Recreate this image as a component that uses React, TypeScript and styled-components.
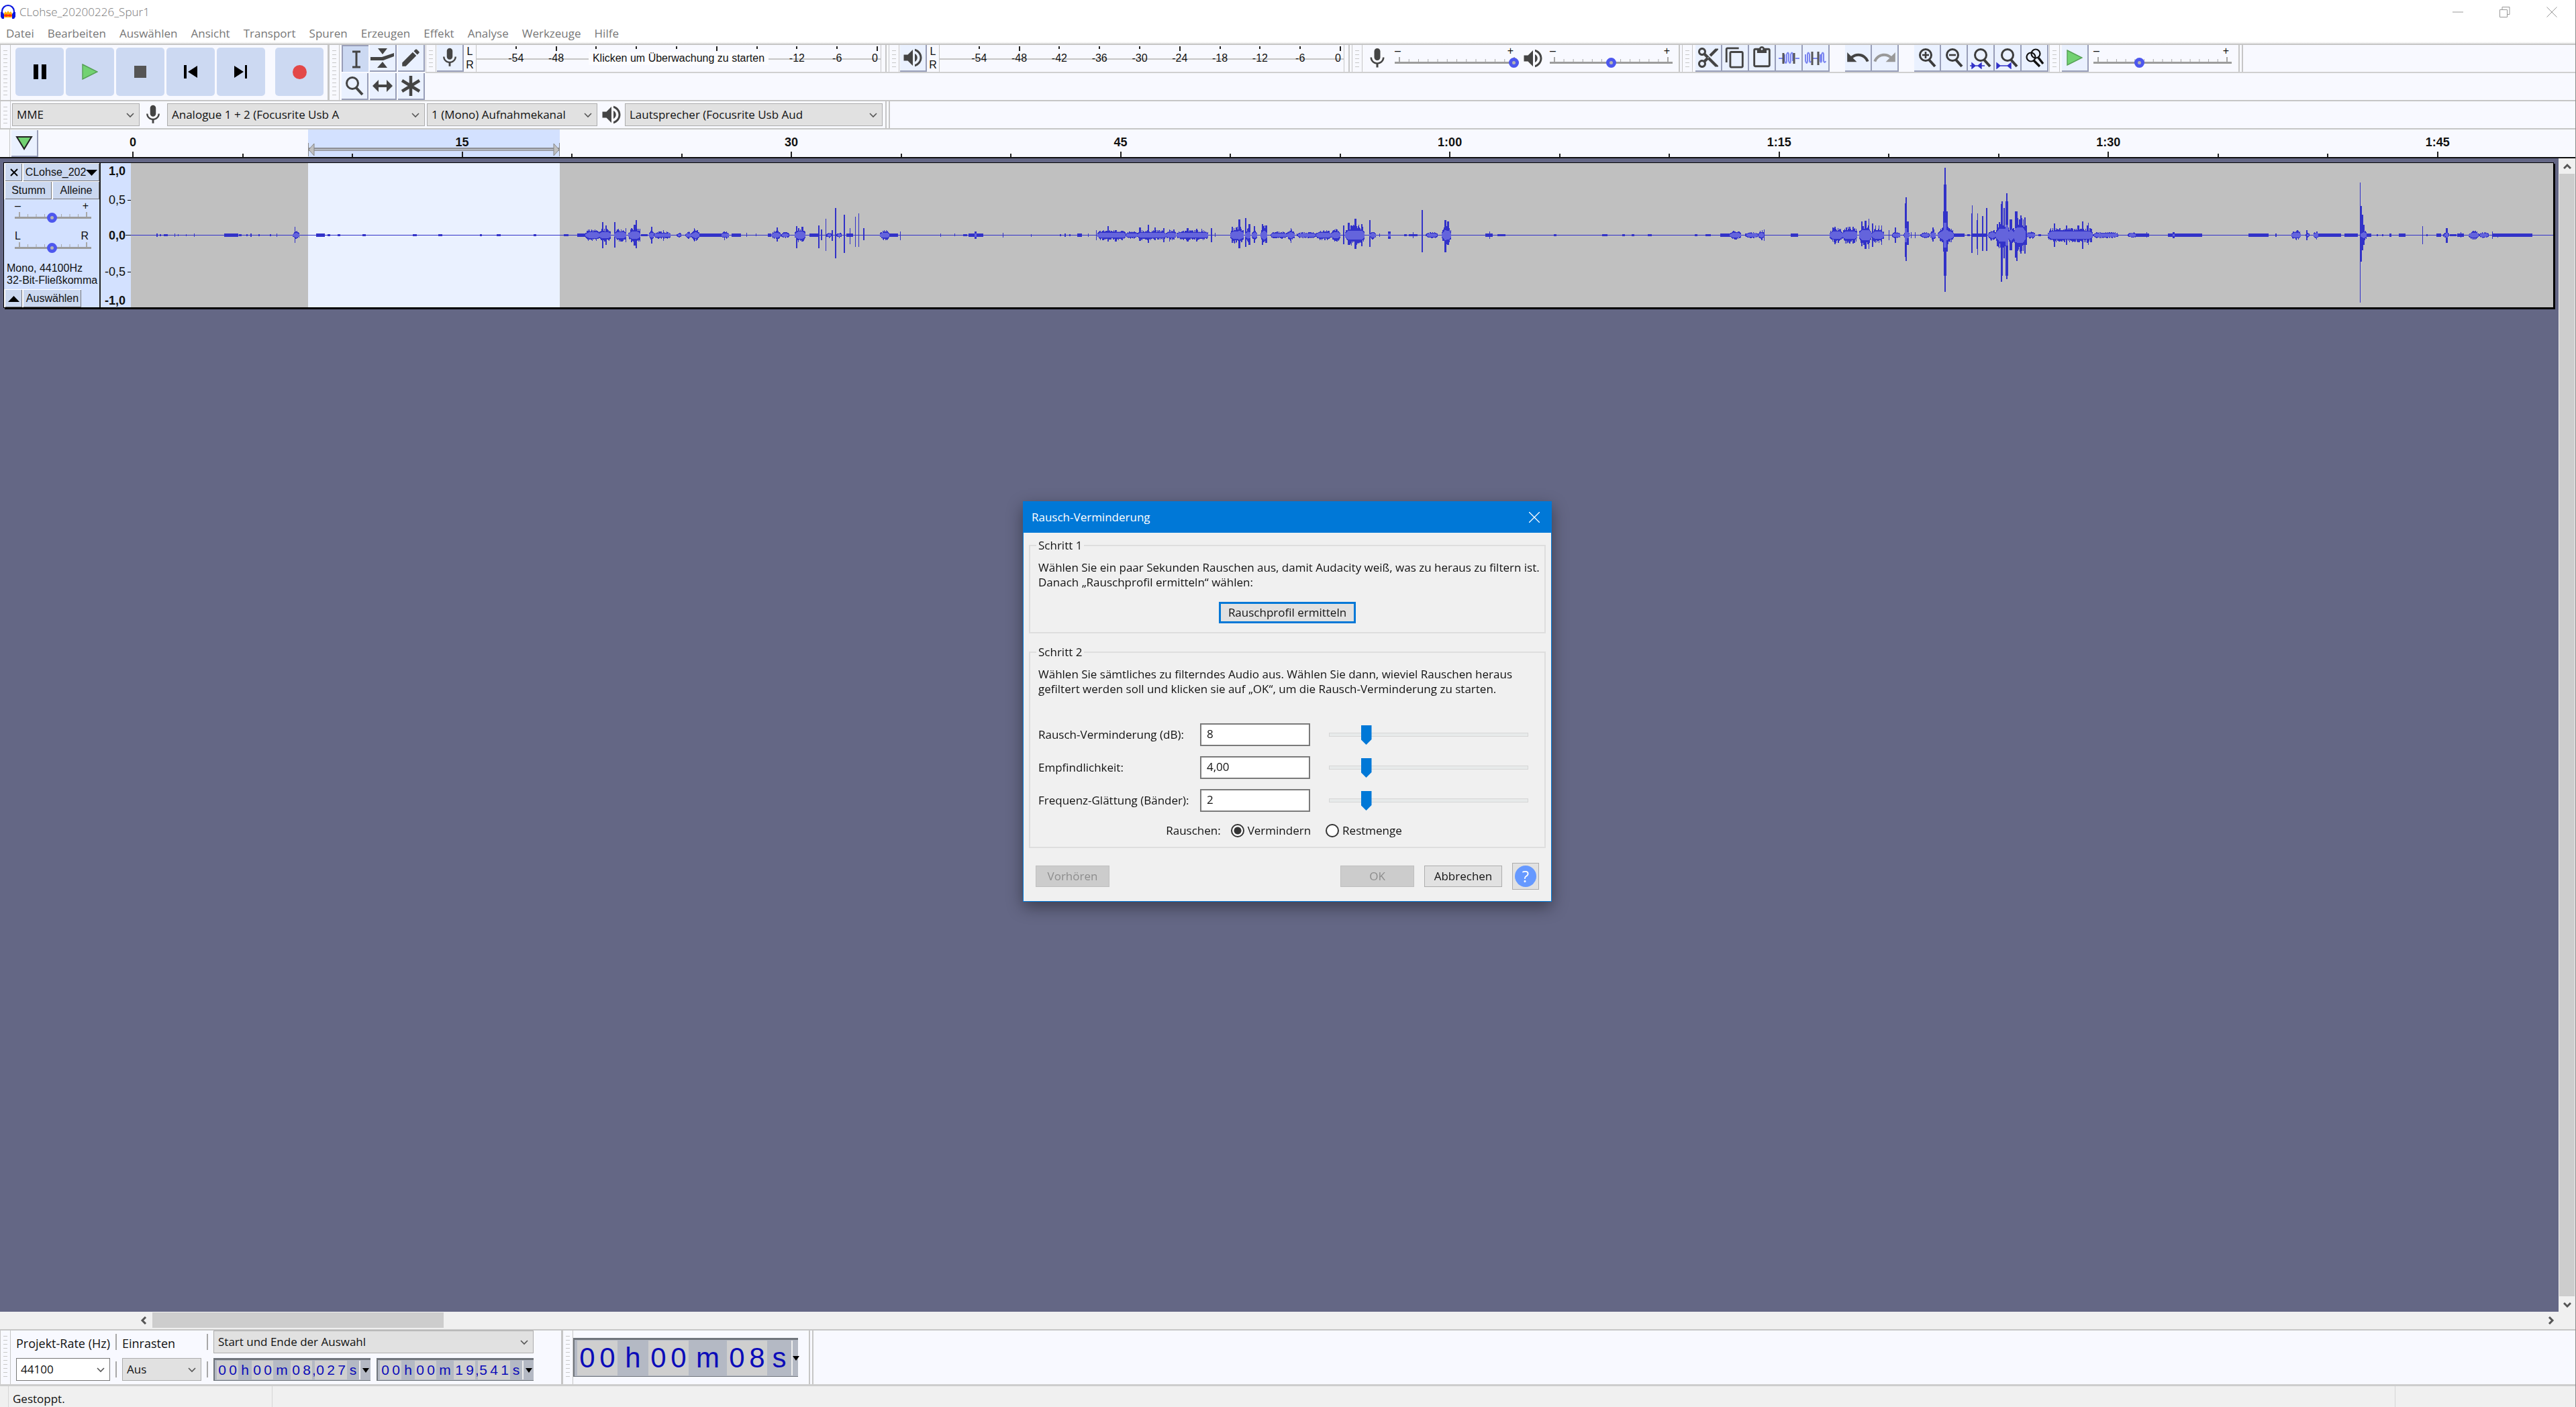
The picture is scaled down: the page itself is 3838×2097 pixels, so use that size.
import React from "react";
import styled, { createGlobalStyle, css } from "styled-components";
import {
  MdContentCopy,
  MdContentCut,
  MdContentPaste,
  MdEdit,
  MdMic,
  MdRedo,
  MdUndo,
  MdVolumeUp,
} from "react-icons/md";

const ui = '"Open Sans", "Noto Sans", sans-serif';
const arial = '"Liberation Sans", Arial, sans-serif';

const c = {
  bar: "#f8f9ff",
  line: "#c6c6c6",
  tool: "#eaf1ff",
  press: "#ccd9f2",
  panel: "#d3e1ff",
  edge: "#989eb8",
  icon: "#444444",
  area: "#646785",
  accent: "#0078d7",
  blue: "#3232c8",
  rms: "#6464dc",
};

const GlobalStyle = createGlobalStyle`
  *, *::before, *::after { box-sizing: border-box; }
  body { margin: 0; font-family: ${ui}; font-size: 17px; line-height: 22px; color: #111; }
  button, input, select { font: inherit; color: inherit; margin: 0; }
  button { padding: 0; border: 0; background: none; }
  svg { display: block; }
`;

/* ---------- window frame ---------- */

const Window = styled.div`
  display: flex;
  flex-direction: column;
  height: 100vh;
  background: ${c.bar};
  border-right: 1px solid #8a8a8a;
  overflow: hidden;
`;

const TitleBar = styled.header`
  display: flex;
  align-items: center;
  height: 36px;
  background: #fff;
  color: #999;
`;

const WindowTitle = styled.h1`
  flex: 1;
  margin: 0 0 0 5px;
  font-size: 17px;
  font-weight: 300;
  color: #777;
`;

const CaptionButton = styled.button`
  display: grid;
  place-items: center;
  width: 70px;
  height: 32px;
`;

const MenuBar = styled.nav`
  display: flex;
  gap: 20px;
  height: 29px;
  padding: 3px 9px 0;
  background: linear-gradient(#fff 26px, #e8e8e8 29px);
`;

const MenuItem = styled.button`
  height: 22px;
  color: #777;
`;

/* ---------- toolbars ---------- */

const ToolDock = styled.div`
  display: flex;
  height: 84px;
  border-top: 2px solid ${c.line};
`;

const Toolbar = styled.div<{ $gap?: boolean }>`
  display: flex;
  align-items: stretch;
  border-right: 2px solid ${c.line};
  margin-right: ${(p) => (p.$gap ? "3px" : "0")};
`;

const Grabber = styled.div`
  flex: none;
  width: 16px;
  border-left: 1px solid ${c.line};
  border-right: 1px solid ${c.line};
  background: repeating-linear-gradient(transparent 0 4px, #c8c8c8 4px 5px, transparent 5px 6px) 4px
    4px / 6px calc(100% - 10px) no-repeat;
`;

const TransportButtons = styled.div`
  display: flex;
  gap: 3px;
  padding: 4px 6px 4px 7px;
`;

const TransportButton = styled.button<{ $apart?: boolean }>`
  display: grid;
  place-items: center;
  width: 72px;
  height: 72px;
  border-radius: 5px;
  background: ${c.press};
  margin-left: ${(p) => (p.$apart ? "12px" : "0")};
`;

const ToolGrid = styled.div`
  display: grid;
  grid-template-columns: repeat(3, 40px);
  grid-auto-rows: 40px;
  gap: 2px;
  padding: 0 1px 0 3px;
`;

const ToolButton = styled.button<{ $down?: boolean }>`
  flex: none;
  display: grid;
  place-items: center;
  width: 40px;
  height: 40px;
  color: ${c.icon};
  background: ${(p) => (p.$down ? c.press : c.tool)};
  border: solid ${c.edge};
  border-width: ${(p) => (p.$down ? "2px 0 0 2px" : "0 2px 2px 0")};
`;

const DockRows = styled.div`
  flex: 1;
  display: grid;
  grid-template-rows: 42px 40px;
`;

const DockRow = styled.div`
  display: flex;
  border-bottom: 2px solid #d0d0d0;
`;

const MeterToolbar = styled(Toolbar)`
  padding-right: 6px;
  gap: 1px;
`;

const Channels = styled.div`
  display: grid;
  width: 16px;
  font: 16px/20px ${arial};
  place-items: center;
`;

const MeterBox = styled.button`
  display: grid;
  width: 604px;
  border-left: 1px solid ${c.line};
  border-right: 1px solid ${c.line};
  font: 16px/20px ${arial};
  background: linear-gradient(${c.line}, ${c.line}) 0 20px / 100% 2px no-repeat;
  > * { grid-area: 1 / 1; }
`;

const MeterScale = styled.span`
  display: flex;
  padding-right: 4px;
`;

const MeterMark = styled.span<{ $long?: boolean; $last?: boolean }>`
  flex: 1;
  display: flex;
  flex-direction: column;
  align-items: flex-end;
  padding-top: 2px;
  &::before {
    content: "";
    width: 2px;
    height: ${(p) => (p.$long ? "7px" : "4px")};
    margin-bottom: ${(p) => (p.$long ? "1px" : "4px")};
    background: #222;
  }
  > span {
    display: flex;
    justify-content: ${(p) => (p.$last ? "flex-end" : "center")};
    width: 2px;
  }
`;

const MeterHint = styled.span`
  place-self: center;
  padding: 0 6px;
  background: #fcfcff;
`;

const MixerBody = styled.div<{ $end: number }>`
  display: flex;
  align-items: flex-start;
  padding-right: ${(p) => p.$end}px;
`;

const BarIcon = styled.span<{ $w: number }>`
  display: grid;
  place-items: center;
  align-self: center;
  width: ${(p) => p.$w}px;
  padding-right: 4px;
  color: ${c.icon};
`;

const SliderBox = styled.label<{ $w: number }>`
  display: block;
  flex: none;
  width: ${(p) => p.$w}px;
  font: 16px/18px ${arial};
`;

const SliderMarks = styled.span<{ $inset: number }>`
  display: flex;
  justify-content: space-between;
  height: 17px;
  padding: 0 ${(p) => p.$inset}px 0 0;
`;

const SliderTrack = styled.span`
  display: grid;
  height: 18px;
  > * { grid-area: 1 / 1; width: 100%; height: 18px; }
`;

const RoundRange = styled.input`
  appearance: none;
  background: linear-gradient(#9c9c9c, #9c9c9c) 0 8px / 100% 3px no-repeat;
  &::-webkit-slider-thumb {
    appearance: none;
    width: 15px;
    height: 15px;
    border: 5px solid #4d57ee;
    border-radius: 50%;
    background: #b4b4b4;
  }
`;

const ButtonRun = styled.div`
  display: flex;
  gap: 23px;
  padding: 0 1px 0 4px;
`;

const ButtonSet = styled.div`
  display: flex;
`;

const DeviceBar = styled.div`
  display: flex;
  height: 42px;
  border-top: 2px solid ${c.line};
`;

const DeviceFields = styled.div`
  display: flex;
  align-items: center;
  padding: 0 1px 1px 2px;
`;

const SelectBox = styled.span<{ $w: number; $plain?: boolean }>`
  display: grid;
  align-items: center;
  width: ${(p) => p.$w}px;
  margin-right: 3px;
  > * { grid-area: 1 / 1; }
  > svg { justify-self: end; margin-right: 8px; pointer-events: none; }
  > select {
    appearance: none;
    width: 100%;
    height: 34px;
    padding: 0 28px 0 6px;
    border: 1px solid ${(p) => (p.$plain ? "#777" : "#adadad")};
    border-radius: 0;
    background: ${(p) => (p.$plain ? "#fff" : "#e1e1e1")};
  }
`;

/* ---------- timeline ---------- */

const Timeline = styled.div`
  display: flex;
  height: 45px;
  border-top: 2px solid ${c.line};
  border-bottom: 2px solid #111;
`;

const TimelineHead = styled.div`
  width: 197px;
  padding-left: 14px;
`;

const PinCell = styled.div`
  border-left: 1px solid ${c.line};
  padding: 1px 0 0 2px;
`;

const TimelineScale = styled.div`
  position: relative;
  flex: 1;
  display: grid;
  grid-template-columns: repeat(7, 4904fr) 2062fr;
`;

const TimelineSelection = styled.div`
  position: absolute;
  left: 7.2%;
  width: 10.3%;
  top: 0;
  bottom: 0;
  display: flex;
  align-items: flex-end;
  justify-content: space-between;
  padding-bottom: 1px;
  background:
    linear-gradient(#8e9096 0 2px, #b4b8c0 2px 4px, #8e9096 4px 5px) 0 27px / 100% 5px no-repeat,
    ${c.panel};
`;

const Segment = styled.div<{ $parts: number }>`
  position: relative;
  display: grid;
  grid-template-columns: repeat(${(p) => p.$parts}, 1fr);
  align-items: end;
`;

const Tick = styled.span<{ $major?: boolean }>`
  display: flex;
  flex-direction: column;
  align-items: center;
  justify-content: space-between;
  width: 2px;
  height: ${(p) => (p.$major ? "32px" : "5px")};
  font: bold 18px/20px ${arial};
  &::after {
    content: "";
    width: 2px;
    height: ${(p) => (p.$major ? "8px" : "5px")};
    background: #222;
  }
`;

/* ---------- tracks ---------- */

const Workspace = styled.main`
  flex: 1;
  display: flex;
  min-height: 0;
`;

const TrackArea = styled.div`
  flex: 1;
  min-width: 0;
  padding: 6px 7px 0 5px;
  background: ${c.area};
`;

const Track = styled.section`
  display: flex;
  height: 217px;
  border: 1px solid #000;
  box-shadow: 2px 2px 0 #000;
`;

const TrackPanel = styled.div`
  flex: none;
  display: flex;
  flex-direction: column;
  width: 144px;
  border-right: 2px solid #222;
  background: ${c.panel};
  font: 16px/18px ${arial};
`;

const PanelRow = styled.div`
  display: flex;
  height: 27px;
`;

const PanelButton = styled.button<{ $w?: number }>`
  ${(p) => (p.$w ? css`flex: none; width: ${p.$w}px;` : css`flex: 1;`)}
  display: flex;
  align-items: center;
  justify-content: center;
  overflow: hidden;
  white-space: nowrap;
  background: #cbd8f0;
  border: solid #fff;
  border-width: 1px 0 0 2px;
  box-shadow: inset -1px -1px #77777a;
`;

const PanelSliders = styled.div`
  flex: 1;
  display: flex;
  flex-direction: column;
  gap: 10px;
  padding: 1px 0 0 16px;
`;

const TrackInfo = styled.p`
  margin: 0;
  padding: 0 0 4px 4px;
  white-space: nowrap;
`;

const LevelRuler = styled.div`
  flex: none;
  display: grid;
  grid-template-rows: 24fr 62fr 43fr 66fr 20fr;
  width: 45px;
  background: ${c.panel};
  font: 18px/20px ${arial};
`;

const Level = styled.span<{ $bold?: boolean; $tick: number }>`
  display: flex;
  align-items: center;
  justify-content: flex-end;
  font-weight: ${(p) => (p.$bold ? "bold" : "normal")};
  &::after {
    content: "";
    width: ${(p) => p.$tick}px;
    height: 1px;
    margin-left: ${(p) => 8 - p.$tick}px;
    background: #111;
  }
`;

const Wave = styled.svg`
  flex: 1;
  min-width: 0;
  height: 215px;
  background: #c0c0c0;
`;

const VScroll = styled.div`
  display: flex;
  flex-direction: column;
  width: 25px;
  padding: 0 1px;
  background: #f0f0f0;
`;

const HScroll = styled.div`
  display: flex;
  height: 26px;
  padding: 1px 25px 2px 203px;
  background: #f0f0f0;
`;

const ScrollButton = styled.button`
  display: grid;
  place-items: center;
  flex: none;
  width: 24px;
  height: 23px;
`;

const ScrollTrack = styled.div`
  flex: 1;
  display: flex;
`;

const ScrollThumb = styled.div<{ $size: string; $vertical?: boolean }>`
  background: #cdcdcd;
  ${(p) => (p.$vertical ? `width: 100%; height: ${p.$size};` : `height: 100%; width: ${p.$size};`)}
`;

/* ---------- bottom bars ---------- */

const BottomDock = styled.footer`
  display: flex;
  height: 85px;
  border-top: 2px solid ${c.line};
  border-bottom: 3px solid #cdcdcd;
`;

const SelectionFields = styled.div`
  display: grid;
  grid-template-columns: 140px 2px 118px 2px 477px;
  column-gap: 8px;
  grid-template-rows: 34px 34px;
  row-gap: 7px;
  align-items: center;
  padding: 0 41px 0 8px;
`;

const FieldLabel = styled.span`
  font-size: 18px;
  white-space: nowrap;
  padding-top: 4px;
`;

const Divider = styled.i`
  height: 24px;
  background: #a8a8a8;
`;

const TimePair = styled.div`
  display: flex;
  justify-content: space-between;
`;

const TimeBox = styled.div<{ $big?: boolean }>`
  display: flex;
  width: ${(p) => (p.$big ? 335 : 234)}px;
  height: ${(p) => (p.$big ? 58 : 34)}px;
  padding: ${(p) => (p.$big ? "1px 0 1px 4px" : "1px 0 1px 3px")};
  border: solid #70757c;
  border-width: 3px 0 1px 2px;
  background: #b4b9c4;
  color: #0b0bb8;
  font: ${(p) => (p.$big ? "42px/52px" : "21px/28px")} ${arial};
`;

const TimeCell = styled.span<{ $w: number; $digit: boolean }>`
  flex: none;
  width: ${(p) => p.$w}px;
  text-align: center;
  background: ${(p) => (p.$digit ? "#cfcfcf" : "transparent")};
`;

const TimeArrow = styled.button`
  flex: 1;
  display: grid;
  place-items: center;
  border-left: 2px solid #eee;
`;

const BigTimeHolder = styled.div`
  display: flex;
  align-items: center;
  padding: 0 16px 0 0;
`;

const StatusBar = styled.div`
  display: flex;
  height: 31px;
  padding-left: 12px;
  background: #f0f0f0;
`;

const StatusCell = styled.output<{ $w?: number }>`
  ${(p) => (p.$w ? css`width: ${p.$w}px;` : css`flex: 1;`)}
  padding: 8px 6px 0;
  border-left: 1px solid #d6d6d6;
`;

/* ---------- dialog ---------- */

const DialogLayer = styled.div`
  position: fixed;
  inset: 0;
  display: grid;
  place-items: center;
  padding: 0 2px 6px 0;
`;

const DialogBox = styled.section`
  width: 788px;
  border: 1px solid ${c.accent};
  background: #f0f0f0;
  box-shadow: 0 8px 22px rgba(0, 0, 0, 0.4);
`;

const DialogTitle = styled.header`
  display: flex;
  align-items: center;
  height: 46px;
  padding: 0 0 0 12px;
  background: ${c.accent};
  color: #fff;
  > h2 { flex: 1; margin: 0; font-size: 17px; font-weight: 400; }
  > button { display: grid; place-items: center; width: 50px; height: 44px; }
`;

const DialogBody = styled.form`
  padding: 8px 8px 17px 8px;
`;

const Group = styled.fieldset`
  min-width: 0;
  margin: 0 0 17px;
  padding: 11px 12px 13px;
  border: 2px solid #dedede;
  > legend { padding: 0 3px; margin-left: -3px; line-height: 22px; }
  > p { margin: 0; white-space: nowrap; }
`;

const PushButton = styled.button<{ $w: number; $focus?: boolean }>`
  width: ${(p) => p.$w}px;
  height: 32px;
  background: #e1e1e1;
  border: ${(p) => (p.$focus ? `3px solid ${c.accent}` : "1px solid #adadad")};
  white-space: nowrap;
  &:disabled { background: #cccccc; border-color: #bfbfbf; color: #8d8d8d; }
`;

const Centered = styled.div`
  display: flex;
  justify-content: center;
  padding-top: 18px;
`;

const Params = styled.div`
  display: grid;
  grid-template-columns: 241px 164px 1fr;
  align-items: center;
  row-gap: 15px;
  padding: 40px 12px 0 0;
`;

const NumberField = styled.input`
  height: 34px;
  padding: 0 8px 3px;
  border: 2px solid #7a7a7a;
  background: #fff;
`;

const PointerRange = styled.input`
  appearance: none;
  height: 30px;
  margin-left: 28px;
  background: none;
  &::-webkit-slider-runnable-track {
    height: 6px;
    border: 1px solid #d6d6d6;
    background: #e7eaea;
  }
  &::-webkit-slider-thumb {
    appearance: none;
    width: 16px;
    height: 29px;
    margin-top: -12px;
    background: ${c.accent};
    clip-path: polygon(0 0, 100% 0, 100% 72%, 50% 100%, 0 72%);
  }
`;

const Choices = styled.div`
  display: flex;
  align-items: center;
  justify-content: center;
  height: 22px;
  margin-top: 17px;
  padding-right: 10px;
`;

const Choice = styled.label`
  display: flex;
  align-items: center;
  gap: 5px;
  margin-left: 15px;
  & + & { margin-left: 22px; }
  > input {
    appearance: none;
    width: 20px;
    height: 20px;
    border: 2px solid #333;
    border-radius: 50%;
    background: #fff;
  }
  > input:checked { background: radial-gradient(#333 5px, #fff 6px); }
`;

const DialogButtons = styled.div`
  display: flex;
  align-items: center;
  gap: 15px;
  margin-top: 22px;
  padding: 0 10px;
  > :first-child { margin-right: auto; }
`;

const HelpButton = styled.button`
  display: grid;
  place-items: center;
  width: 40px;
  height: 40px;
  border: 1px solid #adadad;
  background: #e1e1e1;
  > span {
    width: 32px;
    height: 32px;
    border-radius: 50%;
    background: #6699ff;
    color: #fff;
    font-size: 24px;
    line-height: 32px;
  }
`;

/* ---------- drawings ---------- */

const Chevron = ({ dir = "down", bold }: { dir?: "down" | "up" | "left" | "right"; bold?: boolean }) => {
  const d = {
    down: "M1 4l5 5 5-5",
    up: "M1 9l5-5 5 5",
    left: "M8 1L3 6l5 5",
    right: "M4 1l5 5-5 5",
  }[dir];
  return (
    <svg width="12" height="12" viewBox="0 0 12 12" fill="none" stroke="#555" strokeWidth={bold ? 3 : 1.6}>
      <path d={d} />
    </svg>
  );
};

const Logo = () => (
  <svg width="24" height="24" viewBox="0 0 24 24">
    <path d="M6 20V14l2-3 2 2 2-3 2 3 2-2 2 3v6z" fill="#ffb000" />
    <path d="M5 17l4-2 3 1 3-1 4 2-4 2-3-1-3 1z" fill="#f31" />
    <path d="M3 15V11a9 9 0 0 1 18 0v4" fill="none" stroke="#0a16e0" strokeWidth="2.2" />
    <path d="M1 12h3l2 3v7H3l-2-3zM23 12h-3l-2 3v7h3l2-3z" fill="#0a16e0" />
  </svg>
);

const Lens = ({ mark, fit }: { mark?: "plus" | "minus"; fit?: "sel" | "all" }) => (
  <svg width="34" height="34" viewBox="0 0 34 34" fill="none" stroke="#3c3c3c" strokeWidth="3">
    <circle cx={fit ? 17 : 15} cy="13" r="8.5" />
    <path d={fit ? "M22 20l9 10" : "M20 20l9 10"} strokeWidth="4" />
    {mark && <path d="M10 13h10" strokeWidth="2.6" />}
    {mark === "plus" && <path d="M15 8v10" strokeWidth="2.6" />}
    {fit === "sel" && <path d="M1 29h22M9 29L4 25v8zM13 29l5-4v8z" stroke={c.blue} fill={c.blue} strokeWidth="1.4" />}
    {fit === "all" && <path d="M3 29h19M1 25v8l5-4zM22 25v8l-5-4z" stroke={c.blue} fill={c.blue} strokeWidth="1.4" />}
  </svg>
);

const LensPair = () => (
  <svg width="34" height="34" viewBox="0 0 34 34" fill="none" stroke="#111" strokeWidth="2.2">
    <circle cx="19" cy="11" r="6.5" />
    <circle cx="12" cy="16" r="6.5" />
    <path d="M23 17l7 9M16 21l9 9" strokeWidth="3.4" />
  </svg>
);

const Trim = ({ outside }: { outside?: boolean }) => (
  <svg width="34" height="34" viewBox="0 0 34 34" fill="none">
    {outside ? (
      <path d="M2 12v10q2 6 3 0v-10q1-5 3 0v10q1 4 2 0M13 18h8M24 12v10q1 4 2 0v-10q2-5 3 0v10q2 4 3 0" stroke="#7b86f0" strokeWidth="2" />
    ) : (
      <path d="M2 18h6M27 18h6M11 12v10q2 6 3 0v-10q2-5 3 0v10q2 6 3 0v-10q2-5 3 0v10" stroke="#7b86f0" strokeWidth="2" />
    )}
    <path d={outside ? "M12 8v20M21 8v20" : "M9 10v16M25 10v16"} stroke="#555" strokeWidth="3" />
  </svg>
);

const PlayTriangle = ({ size }: { size: number }) => (
  <svg width={size} height={size} viewBox="0 0 24 24">
    <path d="M1 1l22 11L1 23z" fill="#72d272" stroke="#55a055" strokeWidth="1.4" />
  </svg>
);

const TickLines = styled.svg`
  overflow: visible;
`;

const Ticks = ({ count }: { count: number }) => (
  <svg>
    <TickLines x="7" y="0" width="calc(100% - 14px)" height="18">
      {Array.from({ length: count }, (_, i) => {
        const end = i === 0 || i === count - 1;
        const x = `${(100 * i) / (count - 1)}%`;
        return <line key={i} x1={x} x2={x} y1={end ? 1 : 4} y2="9" stroke="#a8a8a8" strokeWidth={end ? 2 : 1} />;
      })}
    </TickLines>
  </svg>
);

/* Runs of low-level sound: start, end, half height. */
const runs: number[][] = [
  [38, 40, 3], [43, 45, 2], [49, 55, 2], [65, 66, 3], [70, 71, 2], [82, 83, 2], [94, 95, 3], [139, 160, 3], [161, 165, 2],
  [172, 174, 2], [178, 180, 3], [190, 192, 2],
  [207, 209, 2], [217, 218, 3], [241, 251, 6], [276, 289, 3], [293, 297, 2], [308, 312, 2], [345, 350, 2], [420, 426, 2], [458, 464, 2],
  [520, 523, 2], [545, 551, 2], [600, 604, 2], [645, 652, 2], [665, 677, 3], [677, 699, 8], [697, 715, 9], [720, 738, 9],
  [741, 759, 10], [760, 770, 2], [772, 779, 9], [779, 804, 5], [813, 820, 4], [826, 835, 5], [835, 847, 8], [847, 879, 3],
  [879, 891, 5], [895, 909, 3], [949, 954, 3], [954, 968, 6], [968, 981, 4], [989, 1005, 10], [1011, 1024, 3],
  [1036, 1044, 4], [1051, 1059, 4], [1066, 1076, 3], [1116, 1130, 7], [1130, 1143, 3], [1240, 1246, 2], [1248, 1270, 3], [1384, 1386, 2],
  [1391, 1393, 3], [1398, 1400, 2],
  [1410, 1417, 3], [1440, 1482, 7], [1482, 1500, 5], [1500, 1542, 7], [1542, 1557, 7], [1558, 1605, 7], [1638, 1658, 12],
  [1660, 1668, 11], [1670, 1678, 9], [1683, 1693, 14], [1698, 1722, 5], [1722, 1734, 8], [1737, 1766, 4], [1766, 1788, 7],
  [1788, 1802, 9], [1809, 1838, 14], [1845, 1855, 6], [1897, 1901, 2], [1904, 1917, 2], [1929, 1947, 4], [1953, 1967, 14], [2018, 2029, 3],
  [2036, 2048, 2], [2120, 2124, 2], [2192, 2200, 2], [2222, 2226, 2], [2236, 2240, 2], [2260, 2266, 2], [2330, 2334, 2], [2346, 2354, 2],
  [2368, 2382, 3], [2382, 2399, 6], [2405, 2425, 4], [2425, 2433, 8], [2473, 2484, 3], [2531, 2550, 11], [2550, 2572, 12],
  [2575, 2593, 15], [2593, 2612, 10], [2624, 2636, 5], [2641, 2650, 5], [2666, 2680, 4], [2681, 2689, 9],
  [2692, 2716, 10], [2696, 2710, 16], [2716, 2732, 3], [2736, 2740, 2], [2744, 2766, 3], [2767, 2779, 8], [2779, 2798, 20],
  [2797, 2805, 20], [2805, 2823, 24], [2824, 2837, 5], [2842, 2846, 2], [2856, 2923, 10], [2923, 2961, 4],
  [2975, 2988, 4], [2988, 3007, 3], [3035, 3086, 3], [3155, 3185, 3], [3195, 3197, 3], [3219, 3233, 7], [3240, 3246, 4],
  [3252, 3259, 7], [3259, 3293, 3], [3298, 3318, 3], [3322, 3331, 9], [3331, 3338, 3], [3346, 3348, 2], [3354, 3356, 2], [3365, 3368, 3],
  [3379, 3389, 3], [3420, 3422, 2], [3435, 3442, 3], [3445, 3454, 4], [3455, 3465, 2], [3466, 3476, 3], [3483, 3498, 6],
  [3498, 3513, 4], [3518, 3578, 3],
];

/* Single peaks: position, height above, height below, width. */
const peaks: number[][] = [
  [244, 12, 11, 1], [702, 19, 19, 2], [707, 14, 14, 2], [720, 19, 18, 2], [737, 10, 10, 1], [749, 15, 15, 3], [752, 22, 19, 2],
  [758, 9, 9, 1], [775, 12, 12, 2], [793, 7, 8, 1], [839, 10, 9, 1], [884, 5, 7, 1], [917, 3, 2, 1], [931, 2, 1, 1],
  [962, 11, 9, 2], [991, 13, 19, 2], [999, 12, 9, 3], [1024, 14, 19, 2], [1028, 8, 7, 2], [1035, 24, 23, 1], [1044, 7, 8, 2],
  [1049, 40, 34, 2], [1062, 30, 26, 2], [1071, 10, 13, 1], [1079, 27, 17, 1], [1084, 32, 17, 1], [1091, 10, 7, 2],
  [1146, 5, 7, 1], [1206, 2, 2, 1], [1227, 2, 1, 1], [1257, 5, 5, 3], [1299, 3, 3, 1], [1341, 1, 2, 1], [1426, 2, 2, 1],
  [1438, 7, 7, 1], [1455, 13, 9, 2], [1466, 7, 9, 3], [1502, 11, 8, 3], [1515, 15, 11, 2], [1525, 11, 6, 2],
  [1538, 10, 10, 2], [1547, 8, 9, 1], [1553, 8, 6, 2], [1573, 10, 9, 3], [1587, 9, 9, 2], [1595, 9, 5, 1],
  [1609, 10, 10, 2], [1615, 3, 2, 1], [1640, 12, 11, 2], [1650, 23, 19, 3], [1660, 25, 17, 2], [1665, 16, 14, 3],
  [1673, 13, 11, 2], [1685, 16, 14, 2], [1690, 14, 11, 3], [1728, 10, 11, 1], [1806, 14, 13, 2], [1813, 18, 14, 3],
  [1823, 24, 20, 3], [1833, 16, 16, 2], [1845, 22, 17, 2], [1860, 2, 2, 1], [1873, 5, 5, 4], [1910, 4, 4, 1],
  [1923, 37, 25, 2], [1957, 22, 25, 3], [1961, 20, 14, 3], [2024, 5, 5, 1], [2433, 8, 8, 1], [2538, 12, 13, 2],
  [2578, 20, 16, 2], [2583, 21, 20, 3], [2589, 24, 20, 1], [2594, 17, 17, 2], [2599, 14, 11, 1], [2604, 14, 11, 1],
  [2608, 14, 14, 1], [2619, 7, 7, 1], [2628, 11, 11, 2], [2644, 56, 38, 2], [2643, 47, 32, 3], [2646, 20, 14, 3],
  [2652, 4, 4, 1], [2658, 4, 4, 1], [2684, 11, 9, 2], [2702, 100, 84, 2], [2701, 75, 60, 4], [2700, 35, 24, 7],
  [2743, 44, 26, 1], [2742, 32, 26, 2], [2751, 32, 29, 1], [2750, 22, 20, 2], [2758, 28, 23, 2], [2764, 40, 23, 2],
  [2780, 16, 16, 2], [2786, 46, 69, 2], [2787, 50, 60, 2], [2790, 40, 34, 2], [2794, 62, 65, 2], [2793, 50, 60, 4],
  [2799, 23, 22, 4], [2807, 35, 33, 4], [2809, 30, 38, 2], [2815, 29, 27, 2], [2821, 26, 27, 2], [2823, 14, 14, 2],
  [2865, 17, 17, 2], [2873, 10, 9, 2], [2883, 14, 14, 2], [2892, 9, 9, 2], [2900, 14, 10, 3], [2907, 20, 20, 2],
  [2914, 14, 11, 2], [2916, 18, 14, 1], [2919, 9, 10, 3], [3003, 4, 3, 1], [3042, 4, 4, 3], [3241, 7, 7, 2],
  [3321, 78, 100, 1], [3322, 43, 39, 2], [3324, 30, 22, 2], [3326, 15, 14, 2], [3414, 13, 13, 1], [3449, 10, 11, 3],
  [3471, 4, 3, 1], [3518, 5, 5, 1], [3526, 1, 3, 1],
];

const WIDTH = 3609;
const MID = 107;

function buildWave() {
  const up = new Float32Array(WIDTH);
  const down = new Float32Array(WIDTH);
  const inner = new Float32Array(WIDTH);
  let seed = 7;
  const rand = () => (seed = (seed * 16807) % 2147483647) / 2147483647;
  for (const [a, b, h] of runs) {
    const quiet = h <= 3;
    for (let x = a; x < b; x++) {
      const edge = quiet ? 1 : Math.min(1, 0.4 + Math.min(x - a, b - x) / 7);
      const v = (quiet ? h - 1 : h) * edge;
      up[x] = Math.max(up[x], v * (quiet ? 1 : 0.55 + 0.5 * rand()));
      down[x] = Math.max(down[x], v * (quiet ? 1 : 0.55 + 0.5 * rand()));
      if (!quiet) inner[x] = Math.max(inner[x], v * 0.45);
    }
  }
  for (const [p, u, d, w] of peaks) {
    for (let x = p; x < p + w; x++) {
      up[x] = Math.max(up[x], u);
      down[x] = Math.max(down[x], d);
      if (w > 2) inner[x] = Math.max(inner[x], Math.min(u, d) * 0.3);
    }
  }
  let outer = "";
  let core = "";
  for (let x = 0; x < WIDTH; x++) {
    if (up[x] || down[x]) outer += `M${x} ${MID - Math.round(up[x])}h1V${MID + 1 + Math.round(down[x])}h-1z`;
    if (inner[x] > 1) core += `M${x} ${MID - Math.round(inner[x])}h1V${MID + 1 + Math.round(inner[x])}h-1z`;
  }
  return { outer, core };
}

const wave = buildWave();

/* ---------- composed parts ---------- */

const Select = ({ label, value, w, plain }: { label: string; value: string; w: number; plain?: boolean }) => (
  <SelectBox $w={w} $plain={plain}>
    <select aria-label={label} defaultValue={value}>
      <option>{value}</option>
    </select>
    <Chevron />
  </SelectBox>
);

const LevelSlider = (p: { label: string; w: number; value: number; ticks: number; marks?: string[]; inset?: number }) => (
  <SliderBox $w={p.w} aria-label={p.label}>
    <SliderMarks $inset={p.inset ?? 4}>
      {(p.marks ?? ["–", "+"]).map((m) => (
        <span key={m}>{m}</span>
      ))}
    </SliderMarks>
    <SliderTrack>
      <Ticks count={p.ticks} />
      <RoundRange type="range" aria-label={p.label} defaultValue={p.value} />
    </SliderTrack>
  </SliderBox>
);

const Meter = ({ label, hint }: { label: string; hint?: string }) => (
  <MeterBox aria-label={label}>
    <MeterScale>
      {[-54, -48, -42, -36, -30, -24, -18, -12, -6, 0].map((n) => (
        <MeterMark key={n} $long={n % 24 === 0} $last={n === 0}>
          {(!hint || n < -42 || n > -18) && <span>{n}</span>}
        </MeterMark>
      ))}
    </MeterScale>
    {hint && <MeterHint>{hint}</MeterHint>}
  </MeterBox>
);

const TimeField = ({ value, label, big }: { value: string; label: string; big?: boolean }) => {
  const widths: Record<string, number> = big ? { h: 46, m: 57, s: 36 } : { h: 20, m: 26, ",": 4, s: 18 };
  return (
    <TimeBox $big={big} role="group" aria-label={label}>
      {value.split("").map((ch, i) => (
        <TimeCell key={i} $digit={/\d/.test(ch)} $w={widths[ch] ?? (big ? 30 : 16)}>
          {ch}
        </TimeCell>
      ))}
      <TimeArrow aria-label="Format">
        <svg width="10" height="9" viewBox="0 0 10 9">
          <path d="M0 1h10L5 8z" />
        </svg>
      </TimeArrow>
    </TimeBox>
  );
};

const menus = ["Datei", "Bearbeiten", "Auswählen", "Ansicht", "Transport", "Spuren", "Erzeugen", "Effekt", "Analyse", "Werkzeuge", "Hilfe"];

const params = [
  { id: "reduction", label: "Rausch-Verminderung (dB):", value: "8", max: 48, pos: 8 },
  { id: "sensitivity", label: "Empfindlichkeit:", value: "4,00", max: 24, pos: 4 },
  { id: "smoothing", label: "Frequenz-Glättung (Bänder):", value: "2", max: 12, pos: 2 },
];

const NoiseDialog = () => (
  <DialogLayer>
    <DialogBox role="dialog" aria-label="Rausch-Verminderung">
      <DialogTitle>
        <h2>Rausch-Verminderung</h2>
        <button aria-label="Schließen">
          <svg width="16" height="16" viewBox="0 0 16 16" stroke="#fff" strokeWidth="1.3">
            <path d="M0 0l16 16M16 0L0 16" />
          </svg>
        </button>
      </DialogTitle>
      <DialogBody>
        <Group>
          <legend>Schritt 1</legend>
          <p>
            Wählen Sie ein paar Sekunden Rauschen aus, damit Audacity weiß, was zu heraus zu filtern ist.
            <br />
            Danach „Rauschprofil ermitteln“ wählen:
          </p>
          <Centered>
            <PushButton type="button" $w={204} $focus>
              Rauschprofil ermitteln
            </PushButton>
          </Centered>
        </Group>
        <Group>
          <legend>Schritt 2</legend>
          <p>
            Wählen Sie sämtliches zu filterndes Audio aus. Wählen Sie dann, wieviel Rauschen heraus
            <br />
            gefiltert werden soll und klicken sie auf „OK“, um die Rausch-Verminderung zu starten.
          </p>
          <Params>
            {params.map((p) => (
              <React.Fragment key={p.id}>
                <label htmlFor={p.id}>{p.label}</label>
                <NumberField id={p.id} defaultValue={p.value} />
                <PointerRange type="range" aria-label={p.label} max={p.max} defaultValue={p.pos} />
              </React.Fragment>
            ))}
          </Params>
          <Choices role="radiogroup" aria-label="Rauschen">
            <span>Rauschen:</span>
            <Choice>
              <input type="radio" name="noise" defaultChecked />
              Vermindern
            </Choice>
            <Choice>
              <input type="radio" name="noise" />
              Restmenge
            </Choice>
          </Choices>
        </Group>
        <DialogButtons>
          <PushButton type="button" $w={110} disabled>
            Vorhören
          </PushButton>
          <PushButton type="button" $w={110} disabled>
            OK
          </PushButton>
          <PushButton type="button" $w={116}>
            Abbrechen
          </PushButton>
          <HelpButton type="button" aria-label="Hilfe">
            <span>?</span>
          </HelpButton>
        </DialogButtons>
      </DialogBody>
    </DialogBox>
  </DialogLayer>
);

export default function App() {
  return (
    <>
      <GlobalStyle />
      <Window>
        <TitleBar>
          <Logo />
          <WindowTitle>CLohse_20200226_Spur1</WindowTitle>
          {["M0 8h16", "M4 4V.5h11v11h-3.500M.5 4.500h11v11H.5z", "M.5.5l15 15M15.500.5l-15 15"].map((d, i) => (
            <CaptionButton key={d} aria-label={["Minimieren", "Wiederherstellen", "Schließen"][i]}>
              <svg width="16" height="16" viewBox="0 0 16 16" fill="none" stroke="#999">
                <path d={d} />
              </svg>
            </CaptionButton>
          ))}
        </TitleBar>
        <MenuBar>
          {menus.map((m) => (
            <MenuItem key={m}>{m}</MenuItem>
          ))}
        </MenuBar>

        <ToolDock>
          <Toolbar>
            <Grabber />
            <TransportButtons>
              <TransportButton aria-label="Pause">
                <svg width="19" height="22"><path d="M0 0h7v22H0zM12 0h7v22h-7z" /></svg>
              </TransportButton>
              <TransportButton aria-label="Wiedergabe"><PlayTriangle size={24} /></TransportButton>
              <TransportButton aria-label="Stopp">
                <svg width="18" height="18"><path d="M0 0h18v18H0z" fill="#555" /></svg>
              </TransportButton>
              <TransportButton aria-label="Zum Anfang">
                <svg width="20" height="20"><path d="M0 0h4v20H0zM20 1v18L6 10z" /></svg>
              </TransportButton>
              <TransportButton aria-label="Zum Ende">
                <svg width="20" height="20"><path d="M16 0h3v20h-3zM0 1v18l14-9z" /></svg>
              </TransportButton>
              <TransportButton aria-label="Aufnahme" $apart>
                <svg width="21" height="21"><circle cx="10.500" cy="10.500" r="10.500" fill="#e34848" /></svg>
              </TransportButton>
            </TransportButtons>
          </Toolbar>
          <Grabber />
          <ToolGrid>
            <ToolButton $down aria-label="Auswahlwerkzeug">
              <svg width="32" height="32" fill="none" stroke="#444" strokeWidth="3"><path d="M11 5h12M17 5v23M11 28h12" /></svg>
            </ToolButton>
            <ToolButton aria-label="Hüllkurvenwerkzeug">
              <svg width="38" height="34" fill="#444"><path d="M12 3h14l-7 9zM11 32h15l-7-9zM1 16h17l18-6v5l-16 6H1z" /></svg>
            </ToolButton>
            <ToolButton aria-label="Zeichenwerkzeug"><MdEdit size={34} /></ToolButton>
            <ToolButton aria-label="Zoomwerkzeug">
              <svg width="32" height="32" fill="none" stroke="#444" strokeWidth="3"><circle cx="13" cy="12" r="8.500" /><path d="M18 18l10 11" strokeWidth="4" /></svg>
            </ToolButton>
            <ToolButton aria-label="Verschiebewerkzeug">
              <svg width="32" height="24" fill="#444"><path d="M1 12l9-9v7h12V3l9 9-9 9v-7H10v7z" /></svg>
            </ToolButton>
            <ToolButton aria-label="Multiwerkzeug">
              <svg width="32" height="32" stroke="#444" strokeWidth="4.500"><path d="M16 1v30M3 8l26 16M29 8L3 24" /></svg>
            </ToolButton>
          </ToolGrid>
          <DockRows>
            <DockRow>
              <MeterToolbar $gap>
                <Grabber />
                <ToolButton aria-label="Aufnahmepegel"><MdMic size={34} /></ToolButton>
                <Channels><span>L</span><span>R</span></Channels>
                <Meter label="Aufnahmepegel" hint="Klicken um Überwachung zu starten" />
              </MeterToolbar>
              <MeterToolbar $gap>
                <Grabber />
                <ToolButton aria-label="Wiedergabepegel"><MdVolumeUp size={36} /></ToolButton>
                <Channels><span>L</span><span>R</span></Channels>
                <Meter label="Wiedergabepegel" />
              </MeterToolbar>
              <Toolbar $gap>
                <Grabber />
                <MixerBody $end={9}>
                  <BarIcon $w={48}><MdMic size={36} /></BarIcon>
                  <LevelSlider label="Aufnahmelautstärke" w={185} value={100} ticks={13} inset={8} />
                  <BarIcon $w={46}><MdVolumeUp size={36} /></BarIcon>
                  <LevelSlider label="Wiedergabelautstärke" w={183} value={50} ticks={13} />
                </MixerBody>
              </Toolbar>
              <Grabber />
              <ButtonRun>
                <ButtonSet>
                  <ToolButton aria-label="Ausschneiden"><MdContentCut size={36} /></ToolButton>
                  <ToolButton aria-label="Kopieren"><MdContentCopy size={34} /></ToolButton>
                  <ToolButton aria-label="Einfügen"><MdContentPaste size={34} /></ToolButton>
                  <ToolButton aria-label="Trimmen"><Trim /></ToolButton>
                  <ToolButton aria-label="Stille"><Trim outside /></ToolButton>
                </ButtonSet>
                <ButtonSet>
                  <ToolButton aria-label="Rückgängig"><MdUndo size={38} /></ToolButton>
                  <ToolButton aria-label="Wiederholen"><MdRedo size={38} color="#999" /></ToolButton>
                </ButtonSet>
                <ButtonSet>
                  <ToolButton aria-label="Vergrößern"><Lens mark="plus" /></ToolButton>
                  <ToolButton aria-label="Verkleinern"><Lens mark="minus" /></ToolButton>
                  <ToolButton aria-label="Auswahl einpassen"><Lens fit="sel" /></ToolButton>
                  <ToolButton aria-label="Projekt einpassen"><Lens fit="all" /></ToolButton>
                  <ToolButton aria-label="Zoom umschalten"><LensPair /></ToolButton>
                </ButtonSet>
              </ButtonRun>
              <Toolbar $gap>
                <Grabber />
                <MixerBody $end={10}>
                  <BarIcon $w={50}>
                    <ToolButton aria-label="Wiedergabe mit Geschwindigkeit"><PlayTriangle size={24} /></ToolButton>
                  </BarIcon>
                  <LevelSlider label="Geschwindigkeit" w={206} value={32} ticks={15} />
                </MixerBody>
              </Toolbar>
              <Toolbar />
            </DockRow>
          </DockRows>
        </ToolDock>

        <DeviceBar>
          <Toolbar $gap>
            <Grabber />
            <DeviceFields>
              <Select label="Audio-Host" value="MME" w={190} />
              <BarIcon $w={38}><MdMic size={34} /></BarIcon>
              <Select label="Aufnahmegerät" value="Analogue 1 + 2 (Focusrite Usb A" w={384} />
              <Select label="Aufnahmekanäle" value="1 (Mono) Aufnahmekanal" w={254} />
              <BarIcon $w={38}><MdVolumeUp size={36} /></BarIcon>
              <Select label="Wiedergabegerät" value="Lautsprecher (Focusrite Usb Aud" w={384} />
            </DeviceFields>
          </Toolbar>
          <Toolbar />
        </DeviceBar>

        <Timeline>
          <TimelineHead>
            <PinCell>
              <ToolButton aria-label="Abspielkopf anheften">
                <svg width="26" height="24" viewBox="0 0 26 24"><path d="M2 3h22L13 21z" fill="#72d272" stroke="#222" strokeWidth="2" /></svg>
              </ToolButton>
            </PinCell>
          </TimelineHead>
          <TimelineScale>
            <TimelineSelection>
              <svg width="10" height="20" fill="#c0c0c0" stroke="#888"><path d="M.5 0v20M9 1v18L1 10z" /></svg>
              <svg width="10" height="20" fill="#c0c0c0" stroke="#888"><path d="M9.500 0v20M1 1v18l8-9z" /></svg>
            </TimelineSelection>
            {["0", "15", "30", "45", "1:00", "1:15", "1:30", "1:45"].map((t, i) => (
              <Segment key={t} $parts={i < 7 ? 3 : 1}>
                <Tick $major>{t}</Tick>
                {i < 7 && <Tick />}
                {i < 7 && <Tick />}
              </Segment>
            ))}
          </TimelineScale>
        </Timeline>

        <Workspace>
          <TrackArea>
            <Track aria-label="CLohse_20200226_Spur1">
              <TrackPanel>
                <PanelRow>
                  <PanelButton $w={27} aria-label="Spur schließen">
                    <svg width="12" height="12" stroke="#000" strokeWidth="2"><path d="M1 1l10 10M11 1L1 11" /></svg>
                  </PanelButton>
                  <PanelButton>
                    CLohse_202
                    <svg width="17" height="9"><path d="M0 0h17l-8.500 9z" /></svg>
                  </PanelButton>
                </PanelRow>
                <PanelRow>
                  <PanelButton>Stumm</PanelButton>
                  <PanelButton>Alleine</PanelButton>
                </PanelRow>
                <PanelSliders>
                  <LevelSlider label="Verstärkung" w={114} value={48} ticks={9} />
                  <LevelSlider label="Balance" w={114} value={48} ticks={9} marks={["L", "R"]} />
                </PanelSliders>
                <TrackInfo>
                  Mono, 44100Hz
                  <br />
                  32-Bit-Fließkomma
                </TrackInfo>
                <PanelRow>
                  <PanelButton $w={27} aria-label="Einklappen">
                    <svg width="17" height="9"><path d="M0 9h17L8.500 0z" /></svg>
                  </PanelButton>
                  <PanelButton $w={88}>Auswählen</PanelButton>
                </PanelRow>
              </TrackPanel>
              <LevelRuler>
                <Level $bold $tick={0}>1,0</Level>
                <Level $tick={5}>0,5</Level>
                <Level $bold $tick={8}>0,0</Level>
                <Level $tick={5}>-0,5</Level>
                <Level $bold $tick={0}>-1,0</Level>
              </LevelRuler>
              <Wave viewBox={`0 0 ${WIDTH} 215`} preserveAspectRatio="none" shapeRendering="crispEdges">
                <rect x="264" y="0" width="375" height="215" fill={c.tool} />
                <rect x="0" y={MID} width={WIDTH} height="1" fill={c.blue} />
                <path d={wave.outer} fill={c.blue} />
                <path d={wave.core} fill={c.rms} />
              </Wave>
            </Track>
          </TrackArea>
          <VScroll role="scrollbar" aria-orientation="vertical" aria-valuenow={0} aria-controls="root">
            <ScrollButton aria-label="Nach oben"><Chevron dir="up" bold /></ScrollButton>
            <ScrollTrack><ScrollThumb $vertical $size="100%" /></ScrollTrack>
            <ScrollButton aria-label="Nach unten"><Chevron bold /></ScrollButton>
          </VScroll>
        </Workspace>
        <HScroll role="scrollbar" aria-orientation="horizontal" aria-valuenow={0} aria-controls="root">
          <ScrollButton aria-label="Nach links"><Chevron dir="left" bold /></ScrollButton>
          <ScrollTrack><ScrollThumb $size="12.200%" /></ScrollTrack>
          <ScrollButton aria-label="Nach rechts"><Chevron dir="right" bold /></ScrollButton>
        </HScroll>

        <BottomDock>
          <Toolbar>
            <Grabber />
            <SelectionFields>
              <FieldLabel>Projekt-Rate (Hz)</FieldLabel>
              <Divider />
              <FieldLabel>Einrasten</FieldLabel>
              <Divider />
              <Select label="Auswahlmodus" value="Start und Ende der Auswahl" w={477} />
              <Select label="Projekt-Rate (Hz)" value="44100" w={140} plain />
              <Divider />
              <Select label="Einrasten" value="Aus" w={118} />
              <Divider />
              <TimePair>
                <TimeField label="Auswahlbeginn" value="00h00m08,027s" />
                <TimeField label="Auswahlende" value="00h00m19,541s" />
              </TimePair>
            </SelectionFields>
          </Toolbar>
          <Toolbar $gap>
            <Grabber />
            <BigTimeHolder>
              <TimeField label="Audioposition" value="00h00m08s" big />
            </BigTimeHolder>
          </Toolbar>
          <Toolbar />
        </BottomDock>
        <StatusBar>
          <StatusCell $w={393}>Gestoppt.</StatusCell>
          <StatusCell />
          <StatusCell $w={269} />
        </StatusBar>
      </Window>
      <NoiseDialog />
    </>
  );
}
